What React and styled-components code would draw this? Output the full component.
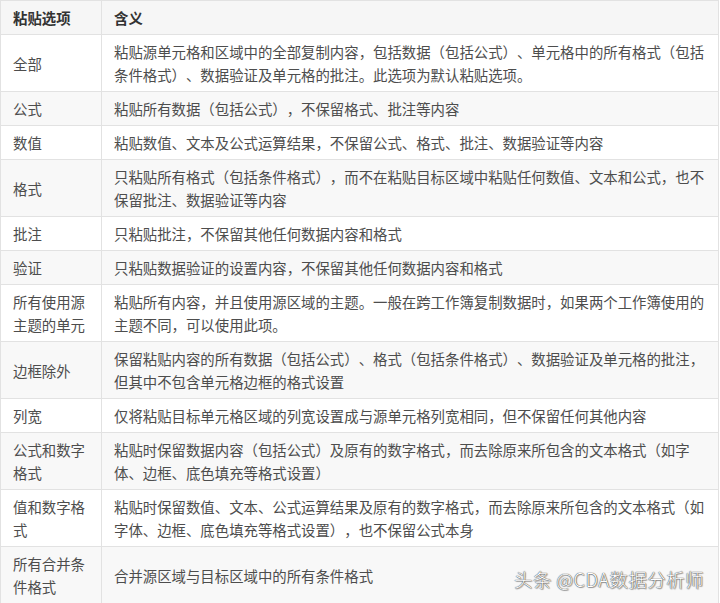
import React from 'react';
import styled, { createGlobalStyle } from 'styled-components';

const GlobalStyle = createGlobalStyle`
	html, body {
		margin: 0;
		padding: 0;
		background: #fff;
	}
	body {
		font-family: "Noto Sans CJK SC", "Noto Sans", sans-serif;
		text-spacing-trim: space-all;
	}
`;

const rows = [
	['全部', '粘贴源单元格和区域中的全部复制内容，包括数据（包括公式）、单元格中的所有格式（包括条件格式）、数据验证及单元格的批注。此选项为默认粘贴选项。'],
	['公式', '粘贴所有数据（包括公式），不保留格式、批注等内容'],
	['数值', '粘贴数值、文本及公式运算结果，不保留公式、格式、批注、数据验证等内容'],
	['格式', '只粘贴所有格式（包括条件格式），而不在粘贴目标区域中粘贴任何数值、文本和公式，也不保留批注、数据验证等内容'],
	['批注', '只粘贴批注，不保留其他任何数据内容和格式'],
	['验证', '只粘贴数据验证的设置内容，不保留其他任何数据内容和格式'],
	['所有使用源主题的单元', '粘贴所有内容，并且使用源区域的主题。一般在跨工作簿复制数据时，如果两个工作簿使用的主题不同，可以使用此项。'],
	['边框除外', '保留粘贴内容的所有数据（包括公式）、格式（包括条件格式）、数据验证及单元格的批注，但其中不包含单元格边框的格式设置'],
	['列宽', '仅将粘贴目标单元格区域的列宽设置成与源单元格列宽相同，但不保留任何其他内容'],
	['公式和数字格式', '粘贴时保留数据内容（包括公式）及原有的数字格式，而去除原来所包含的文本格式（如字体、边框、底色填充等格式设置）'],
	['值和数字格式', '粘贴时保留数值、文本、公式运算结果及原有的数字格式，而去除原来所包含的文本格式（如字体、边框、底色填充等格式设置），也不保留公式本身'],
	['所有合并条件格式', '合并源区域与目标区域中的所有条件格式'],
];

const Wrapper = styled.div`
	position: relative;
	width: 719px;
`;

const Table = styled.table`
	width: 719px;
	border-collapse: collapse;
	table-layout: fixed;
	font-size: 14.4px;
	line-height: 23px;
	color: #4d4d4d;
	text-spacing-trim: space-all;
`;

const Row = styled.tr`
	background: ${(p) => (p.$shaded ? '#f8f8f8' : '#fff')};
`;

const HeadCell = styled.th`
	box-sizing: border-box;
	width: ${(p) => p.$width || 'auto'};
	padding: 5px 12px;
	border: 1px solid #e2e2e2;
	background: #f6f6f6;
	color: #333;
	font-weight: 700;
	text-align: left;
	vertical-align: middle;
`;

const Cell = styled.td`
	padding: 5px 12px;
	border: 1px solid #e2e2e2;
	text-align: left;
	vertical-align: middle;
	word-break: break-all;
`;

const Watermark = styled.div`
	position: absolute;
	right: 15px;
	bottom: 14px;
	font-family: "Noto Sans CJK SC", sans-serif;
	font-size: 18.5px;
	font-weight: 300;
	line-height: 22px;
	color: #fff;
	letter-spacing: 0.4px;
	text-shadow: 0 0 1px #444, 0 0 1px #444, 1px 1px 1px rgba(0, 0, 0, 0.35);
`;

const App = () => {
	return (
		<Wrapper>
			<GlobalStyle />
			<Table>
				<thead>
					<tr>
						<HeadCell $width='101px'>粘贴选项</HeadCell>
						<HeadCell>含义</HeadCell>
					</tr>
				</thead>
				<tbody>
					{rows.map(([name, desc], i) => (
						<Row key={name} $shaded={i % 2 === 1}>
							<Cell>{name}</Cell>
							<Cell>{desc}</Cell>
						</Row>
					))}
				</tbody>
			</Table>
			<Watermark>头条 @CDA数据分析师</Watermark>
		</Wrapper>
	);
};

export default App;
